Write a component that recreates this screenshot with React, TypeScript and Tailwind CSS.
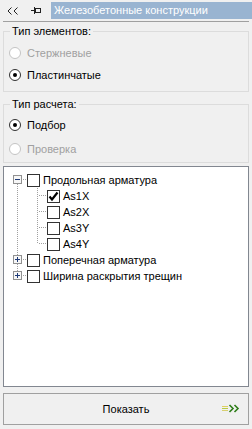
import React from 'react';

type Radio = { label: string; checked?: boolean; disabled?: boolean };

const FONT = { fontFamily: '"Liberation Sans", Arial, sans-serif' };

function dots(x1: number, x2: number, y: number, vertical = false) {
	const out: React.ReactNode[] = [];
	for (let p = x1; p <= x2; p += 2) {
		out.push(
			vertical ? (
				<rect key={`v${p}-${y}`} x={y} y={p} width={1} height={1} fill="#a0a0a0" />
			) : (
				<rect key={`h${p}-${y}`} x={p} y={y} width={1} height={1} fill="#a0a0a0" />
			)
		);
	}
	return out;
}

function RadioRow({ label, checked, disabled }: Radio) {
	return (
		<div className="flex h-[16px] items-center">
			<span
				className={`ml-[5px] flex h-[12px] w-[12px] items-center justify-center rounded-full border bg-white ${
					disabled ? 'border-[#c4c4c4] bg-[#f4f4f4]' : 'border-[#333333]'
				}`}
			>
				{checked ? <span className="h-[4px] w-[4px] rounded-full bg-black" /> : null}
			</span>
			<span className={`ml-[6px] text-[11px] ${disabled ? 'text-[#a0a0a0]' : 'text-black'}`}>
				{label}
			</span>
		</div>
	);
}

function GroupBox({ title, children, className }: { title: string; children: React.ReactNode; className: string }) {
	return (
		<fieldset className={`mx-[3px] border border-[#dcdcdc] ${className}`}>
			<legend className="ml-[6px] px-[2px] text-[11px] leading-[13px] text-black">{title}</legend>
			{children}
		</fieldset>
	);
}

function CheckBox({ checked }: { checked?: boolean }) {
	return (
		<span className="flex h-[13px] w-[13px] shrink-0 items-center justify-center border border-[#333333] bg-white">
			{checked ? (
				<svg width="11" height="11" viewBox="0 0 11 11">
					<path d="M1.5 5.5 L4 8.5 L9.5 1.5" fill="none" stroke="#000" strokeWidth="2.2" />
				</svg>
			) : null}
		</span>
	);
}

function Expander({ open }: { open: boolean }) {
	return (
		<g>
			<rect x={9.5} y={3.5} width={8} height={8} fill="#f7f7f7" stroke="#919191" />
			<rect x={11} y={7} width={5} height={1} fill="#1e3a78" />
			{open ? null : <rect x={13} y={5} width={1} height={5} fill="#1e3a78" />}
		</g>
	);
}

type TopItem = { label: string; open: boolean; pos: 'first' | 'mid' | 'last' };

function TopRow({ label, open, pos }: TopItem) {
	return (
		<div className="flex h-[16px] items-center">
			<svg width="23" height="16" className="shrink-0">
				{pos !== 'first' ? dots(0, 3, 13, true) : null}
				{pos !== 'last' ? dots(12, 15, 13, true) : null}
				<Expander open={open} />
				{dots(19, 21, 7)}
			</svg>
			<CheckBox />
			<span className="ml-[3px] text-[11px] text-black">{label}</span>
		</div>
	);
}

function ChildRow({ label, checked, last }: { label: string; checked?: boolean; last?: boolean }) {
	return (
		<div className="flex h-[16px] items-center">
			<svg width="43" height="16" className="shrink-0">
				{dots(0, 15, 13, true)}
				{dots(0, last ? 7 : 15, 33, true)}
				{dots(35, 41, 7)}
			</svg>
			<CheckBox checked={checked} />
			<span className="ml-[3px] text-[11px] text-black">{label}</span>
		</div>
	);
}

export default function App() {
	return (
		<div className="flex h-[429px] w-[252px] flex-col bg-[#f0f0f0]" style={FONT}>
			<div className="flex h-[21px] items-start pt-[2px]">
				<svg width="12" height="8" viewBox="0 0 12 8" className="ml-[7px] mt-[5px] shrink-0">
					<path d="M4.5 0.5 L1 4 L4.5 7.5 M10.5 0.5 L7 4 L10.5 7.5" fill="none" stroke="#222" strokeWidth="1" />
				</svg>
				<svg width="10" height="7" viewBox="0 0 10 7" className="ml-[12px] mt-[5px] shrink-0">
					<rect x="0" y="3" width="3" height="1" fill="#222" />
					<rect x="3" y="0" width="1" height="7" fill="#222" />
					<rect x="4.5" y="1.5" width="5" height="4" fill="none" stroke="#222" />
				</svg>
				<div className="ml-[10px] flex h-[17px] flex-1 items-center bg-[#99b4d1] pl-[3px] text-[11px] text-white">
					Железобетонные конструкции
				</div>
			</div>
			<div className="mx-[3px] h-px bg-[#a0a0a0]" />

			<GroupBox title="Тип элементов:" className="mt-[3px] pb-[8px] pt-[7px]">
				<RadioRow label="Стержневые" disabled />
				<div className="mt-[6px]">
					<RadioRow label="Пластинчатые" checked />
				</div>
			</GroupBox>

			<GroupBox title="Тип расчета:" className="mt-[6px] pb-[5px] pt-[6px]">
				<RadioRow label="Подбор" checked />
				<div className="mt-[8px]">
					<RadioRow label="Проверка" disabled />
				</div>
			</GroupBox>

			<div className="mx-[3px] mt-[3px] h-[221px] border border-[#828790] bg-white pt-[5px]">
				<TopRow label="Продольная арматура" open pos="first" />
				<ChildRow label="As1X" checked />
				<ChildRow label="As2X" />
				<ChildRow label="As3Y" />
				<ChildRow label="As4Y" last />
				<TopRow label="Поперечная арматура" open={false} pos="mid" />
				<TopRow label="Ширина раскрытия трещин" open={false} pos="last" />
			</div>

			<button
				type="button"
				className="relative mx-[3px] mt-[6px] flex h-[32px] items-center justify-center border border-[#a0a0a0] bg-[#f0f0f0] text-[11px] text-black"
			>
				Показать
				<svg width="18" height="10" viewBox="0 0 18 10" className="absolute right-[8px] top-[10px]">
					<rect x="0" y="2" width="6" height="1" fill="#e0d060" />
					<rect x="0" y="4" width="6" height="1" fill="#b8cc40" />
					<rect x="0" y="6" width="6" height="1" fill="#d8d070" />
					<path d="M7.5 1 L11 4.5 L7.5 8 M12.5 1 L16 4.5 L12.5 8" fill="none" stroke="#2e7d18" strokeWidth="1.6" />
				</svg>
			</button>
		</div>
	);
}
